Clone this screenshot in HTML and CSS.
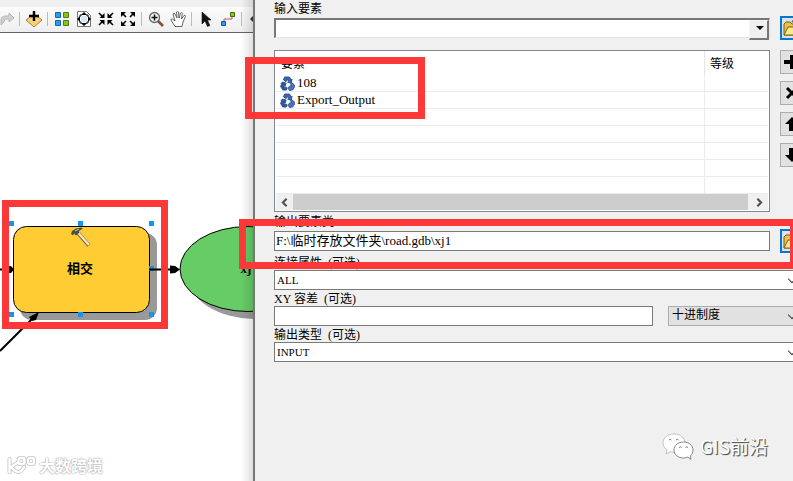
FILE: index.html
```html
<!DOCTYPE html>
<html lang="zh">
    <head>
        <meta charset="utf-8">
        <title>相交</title>
        <link rel="stylesheet" href="styles.css">
    </head>
    <body>
        <div class="desktop">
            <div class="model">
                <div class="toolbar">
                    <button class="tool" aria-label="redo">
                        <svg viewBox="0 0 16 16"><path d="M3 14V9q0-4 5-4h3V2l5 5-5 4V8H8q-2 0-2 3z" fill="#d2d2d2" stroke="#b4b4b4"/></svg>
                    </button>
                    <span class="sep"></span>
                    <button class="tool" aria-label="add data">
                        <svg viewBox="0 0 16 16"><path d="M0 9l8-6 8 6-8 7z" fill="#f5d277" stroke="#a87e34"/><path d="M8 0v10M3 5h10" stroke="#000" stroke-width="2.4"/></svg>
                    </button>
                    <span class="sep"></span>
                    <button class="tool" aria-label="auto layout">
                        <svg viewBox="0 0 16 16"><path d="M1.500 1.500h5v5h-5zM1.500 9.500h5v5h-5z" fill="#2b9cf2" stroke="#1766b0"/><path d="M9.500 1.500h5v5h-5zM9.500 9.500h5v5h-5z" fill="#8cc220" stroke="#547c0c"/></svg>
                    </button>
                    <button class="tool" aria-label="full extent">
                        <svg viewBox="0 0 16 16"><path d="M1.500.5h9l4 4v11h-13z" fill="#fff" stroke="#777"/><path d="M5 5h6v6H5z" fill="#dbe6f2"/><path d="M8 1l3 3H5zM8 15l3-3H5zM1 8l3-3v6zM15 8l-3-3v6z"/><path d="M4 6V4h2M10 4h2v2M12 10v2h-2M6 12H4v-2" fill="none" stroke="#000"/></svg>
                    </button>
                    <button class="tool" aria-label="fixed zoom in">
                        <svg viewBox="0 0 16 16"><path d="M1 2l4 4M15 2l-4 4M1 14l4-4M15 14l-4-4" stroke="#000" stroke-width="1.600"/><path d="M6.500 2v5h-5zM9.500 2v5h5zM6.500 14V9h-5zM9.500 14V9h5z"/></svg>
                    </button>
                    <button class="tool" aria-label="fixed zoom out">
                        <svg viewBox="0 0 16 16"><path d="M2 2l4 4M14 2l-4 4M2 14l4-4M14 14l-4-4" stroke="#000" stroke-width="1.600"/><path d="M1 1h5L1 6zM15 1v5l-5-5zM1 15v-5l5 5zM15 15h-5l5-5z"/></svg>
                    </button>
                    <span class="sep"></span>
                    <button class="tool" aria-label="zoom in">
                        <svg viewBox="0 0 16 16"><path d="M10 10l5 5" stroke="#8f4a3c" stroke-width="2.600"/><circle cx="6.500" cy="6.500" r="5" fill="#eef5fb" stroke="#666" stroke-width="1.300"/><path d="M6.500 3.500v6M3.500 6.500h6" stroke="#111" stroke-width="1.600"/></svg>
                    </button>
                    <button class="tool" aria-label="pan">
                        <svg viewBox="0 0 16 16"><path d="M5 15.500L1 9q0-1.500 1.500-1L5 10 3 3q1-1.500 2 0l2 4-.5-6q1-1 2 0L9 7l1.500-5q1.200-1 1.800.3L11.500 8 14 4.500q1.500-.6 1.500.8L13 11l-1 4.500z" fill="#fff" stroke="#555" stroke-width=".9"/></svg>
                    </button>
                    <span class="sep"></span>
                    <button class="tool" aria-label="select">
                        <svg viewBox="0 0 16 16"><path d="M4 1v12l3-3 2.500 5.500 2.300-1L9.500 9H13z" fill="#111" stroke="#111" stroke-width=".6"/></svg>
                    </button>
                    <button class="tool" aria-label="connect">
                        <svg viewBox="0 0 16 16"><path d="M4 11V8h8V4" fill="none" stroke="#b05a5a"/><path d="M1.500 10.500h4v4h-4z" fill="#2b9cf2" stroke="#1257b5"/><path d="M10.500 1.500h4v4h-4z" fill="#8cc220" stroke="#3f7308"/></svg>
                    </button>
                    <span class="sep"></span>
                    <button class="tool" aria-label="run">
                        <svg viewBox="0 0 16 16"><path d="M2 8l3-3h2v7H6z" fill="#333"/></svg>
                    </button>
                </div>
                <svg class="diagram" viewBox="0 33 253 448" width="253" height="448">
                    <!-- shadows -->
                    <rect x="20" y="233" width="137" height="87" rx="12" fill="#999"/>
                    <ellipse cx="256" cy="276" rx="68" ry="43" fill="#999"/>
                    <!-- tool -->
                    <rect x="13.500" y="226.500" width="136" height="86" rx="13" fill="#fc3" stroke="#000"/>
                    <g fill="#1394f0">
                        <rect x="9" y="221" width="5" height="5"/>
                        <rect x="78" y="221" width="5" height="5"/>
                        <rect x="149" y="221" width="5" height="5"/>
                        <rect x="149" y="266" width="5" height="5"/>
                        <rect x="9" y="312" width="5" height="5"/>
                        <rect x="78" y="312" width="5" height="5"/>
                        <rect x="149" y="312" width="5" height="5"/>
                    </g>
                    <path d="M78 233l11 12.500" stroke="#806a38" stroke-width="4"/>
                    <path d="M78 232.500l11 12.500" stroke="#f1e7c9" stroke-width="2.400"/>
                    <path d="M71 234l1-3 4-2.500 5-1 2 1-4 2.500v2l-3 2.500-2-2-1 2z" fill="#4e4e42"/>
                    <path d="M75 231l4-2" stroke="#c5c5bb"/>
                    <text class="node-name" x="80" y="273">相交</text>
                    <!-- output -->
                    <ellipse cx="248" cy="269" rx="68" ry="42.500" fill="#6c6" stroke="#000"/>
                    <text class="node-out" x="246" y="273">xj</text>
                    <!-- connectors -->
                    <path d="M0 269.500h10M149 269.500h22M0 351l32-32" stroke="#000" stroke-width="2"/>
                    <path d="M8 266h3l3 3.500-3 3.500H8zM170 265.500l5 .5 5 3.500-5 3.500-5 .5zM39 312l-3 8-4 1-3-4z"/>
                </svg>
            </div>

            <div class="dialog">
                <form class="params">
                    <label class="caption" for="in-features">输入要素</label>
                    <div class="row">
                        <div class="combo">
                            <select id="in-features"><option></option></select>
                        </div>
                        <button type="button" class="side browse" aria-label="browse input">
                            <svg viewBox="0 0 20 20"><path d="M2 17V6l2-2h4l2 2h6v11z" fill="#e9c146" stroke="#77601a"/><path d="M2 17l4-8h13l-3 8z" fill="#fce98e" stroke="#77601a"/><path d="M10 4q4-4 7 1" fill="none" stroke="#2a78bd" stroke-width="2"/></svg>
                        </button>
                    </div>
                    <div class="row">
                        <div class="list">
                            <table>
                                <thead>
                                    <tr><th>要素</th><th class="rank">等级</th></tr>
                                </thead>
                                <tbody>
                                    <tr>
                                        <td><span class="item"><svg class="recycle" viewBox="0 0 16 16"><use href="#recycle"/></svg>108</span></td>
                                        <td></td>
                                    </tr>
                                    <tr>
                                        <td><span class="item"><svg class="recycle" viewBox="0 0 16 16"><use href="#recycle"/></svg>Export_Output</span></td>
                                        <td></td>
                                    </tr>
                                    <tr><td></td><td></td></tr>
                                    <tr><td></td><td></td></tr>
                                    <tr><td></td><td></td></tr>
                                    <tr><td></td><td></td></tr>
                                    <tr><td></td><td></td></tr>
                                </tbody>
                            </table>
                            <div class="scroll">
                                <button type="button" aria-label="scroll left"><svg viewBox="0 0 16 16"><path d="M10 4.500L6.500 8l3.500 3.500" fill="none" stroke="#505050" stroke-width="2"/></svg></button>
                                <span class="thumb"></span>
                                <button type="button" aria-label="scroll right"><svg viewBox="0 0 16 16"><path d="M6 4.500L9.500 8 6 11.500" fill="none" stroke="#505050" stroke-width="2"/></svg></button>
                            </div>
                        </div>
                        <div class="actions">
                            <button type="button" class="side" aria-label="add"><svg viewBox="0 0 20 20"><path d="M8 3h5v5h5v4h-5v5H8v-5H2V8h6z"/></svg></button>
                            <button type="button" class="side" aria-label="remove"><svg viewBox="0 0 20 20"><path d="M5 5l10 10M15 5L5 15" stroke="#000" stroke-width="3"/></svg></button>
                            <button type="button" class="side" aria-label="move up"><svg viewBox="0 0 20 20"><path d="M10 3l7 7h-4v7H7v-7H3z"/></svg></button>
                            <button type="button" class="side" aria-label="move down"><svg viewBox="0 0 20 20"><path d="M10 17l7-7h-4V3H7v7H3z"/></svg></button>
                        </div>
                    </div>
                    <label class="caption" for="out-features">输出要素类</label>
                    <div class="row">
                        <input class="box path" id="out-features" type="text" value="F:\临时存放文件夹\road.gdb\xj1">
                        <button type="button" class="side browse" aria-label="browse output">
                            <svg viewBox="0 0 20 20"><path d="M2 17V6l2-2h4l2 2h6v11z" fill="#e9c146" stroke="#77601a"/><path d="M2 17l4-8h13l-3 8z" fill="#fce98e" stroke="#77601a"/><path d="M10 4q4-4 7 1" fill="none" stroke="#2a78bd" stroke-width="2"/></svg>
                        </button>
                    </div>
                    <label class="caption" for="join">连接属性 <span>(可选)</span></label>
                    <div class="drop">
                        <select class="box" id="join"><option>ALL</option></select>
                    </div>
                    <label class="caption" for="tolerance">XY 容差 <span>(可选)</span></label>
                    <div class="pair">
                        <input class="box" id="tolerance" type="text">
                        <div class="drop unit">
                            <select class="box" aria-label="unit"><option>十进制度</option></select>
                        </div>
                    </div>
                    <label class="caption" for="out-type">输出类型 <span>(可选)</span></label>
                    <div class="drop">
                        <select class="box" id="out-type"><option>INPUT</option></select>
                    </div>
                </form>
                <div class="brand">
                    <svg viewBox="0 0 32 28" width="32" height="28">
                        <path d="M12 2C5.500 2 1 6 1 11c0 3 1.500 5.300 4 7l-1 4 4-2.200c8 2 15-2 15-8.800C23 6 18.500 2 12 2z" fill="#fff" stroke="#b5b5b5" stroke-width=".8"/>
                        <path d="M21.500 10C16 10 12 13.500 12 18s4 8 9.500 8c1.500 0 3-.3 4.200-.8l3.300 2-.8-3.400C30 22.500 31 20.500 31 18c0-4.500-4-8-9.500-8z" fill="#fff" stroke="#777" stroke-width=".9"/>
                        <path d="M7 8q1.500-1.500 2.500 0M14 8q1.500-1.500 2.500 0M17 15.500q1.500-1.500 2.500 0M23.500 15.500q1.500-1.500 2.500 0" fill="none" stroke="#777"/>
                    </svg>
                    <span>GIS前沿</span>
                </div>
            </div>

            <!-- highlights -->
            <div class="mark mark-inputs"></div>
            <div class="mark mark-tool"></div>
            <div class="mark mark-output"></div>

            <div class="stamp">
                <svg viewBox="0 0 30 20" width="30" height="20">
                    <g fill="none" stroke-linecap="round" stroke="#c4c4c4" stroke-width="4">
                        <path d="M2.500 4v13M10 8l-6 4 4 4q6 3 9-4"/><rect x="11.500" y="3" width="6" height="6" rx="2"/><rect x="21" y="3" width="6" height="6" rx="2"/>
                    </g>
                    <g fill="none" stroke-linecap="round" stroke="#fff" stroke-width="2.400">
                        <path d="M2.500 4v13M10 8l-6 4 4 4q6 3 9-4"/><rect x="11.500" y="3" width="6" height="6" rx="2"/><rect x="21" y="3" width="6" height="6" rx="2"/>
                    </g>
                </svg>
                <span>大数跨境</span>
            </div>
        </div>

        <svg class="defs" width="0" height="0">
            <symbol id="recycle" viewBox="0 0 16 16">
                <path d="M5 1h5l2 3 1-.5-1 4-4-1 1.200-.8L8 3.500 6.500 6 3.500 4z" fill="#3767b3" stroke="#1d3f80" stroke-width=".8"/>
                <path d="M2.500 6.500l4 1-1 3.500-1-.6L4 12h3v3H3L.5 11 2 8.500 1 8z" fill="#2b59a5" stroke="#1d3f80" stroke-width=".8"/>
                <path d="M12 7l2.500 1.500L16 11l-2.500 4H11v1L8 13l3-3v1.500h2L11 8z" fill="#4779c4" stroke="#1d3f80" stroke-width=".8"/>
            </symbol>
        </svg>
    </body>
</html>
```
FILE: styles.css
```css
* {
    box-sizing: border-box;
}

body {
    margin: 0;
    overflow: hidden;
    font-family: "Liberation Serif", "Noto Sans CJK SC", serif;
    font-size: 12px;
    color: #000;
}

button, input, select {
    margin: 0;
    padding: 0;
    font: inherit;
    color: inherit;
    border-radius: 0;
}

.desktop {
    position: relative;
    display: grid;
    grid-template-columns: 253px 1fr;
    height: 100vh;
    overflow: hidden;
}

.defs {
    position: absolute;
}

/* model window */
.model {
    display: flex;
    flex-direction: column;
    overflow: hidden;
    background: #fff;
}

.toolbar {
    display: flex;
    flex: none;
    align-items: center;
    gap: 6px;
    height: 33px;
    padding-top: 6px;
    border-bottom: 1px solid #646464;
    background: linear-gradient(#f0f0f0 7px, #fcfcfc 7px, #eee);
}

.tool {
    flex: none;
    width: 16px;
    height: 16px;
    border: 0;
    background: none;
}

.tool:first-child {
    margin-left: -2px;
}

.tool svg, .side svg, .scroll svg {
    display: block;
}

.sep {
    flex: none;
    width: 1px;
    height: 14px;
    margin-left: -1px;
    background: #bbb;
}

.diagram {
    display: block;
    flex: none;
}

.node-name {
    font-family: "Noto Sans CJK SC", sans-serif;
    font-size: 13px;
    font-weight: bold;
    text-anchor: middle;
}

.node-out {
    font-size: 13px;
    font-weight: bold;
    text-anchor: middle;
}

/* tool dialog */
.dialog {
    display: flex;
    flex-direction: column;
    min-width: 0;
    overflow: hidden;
    padding-left: 19px;
    border-left: 2px solid #777;
    background: #f0f0f0;
}

.model::after {
    content: "";
    position: absolute;
    top: 0;
    left: 241px;
    width: 12px;
    height: 100%;
    background: linear-gradient(to right, transparent, rgba(0, 0, 0, 0.12));
}

.params {
    display: flex;
    flex-direction: column;
    margin-right: -11px;
}

.caption {
    height: 16px;
    line-height: 18px;
    white-space: nowrap;
}

.caption span {
    margin-left: 3px;
}

.row {
    display: grid;
    grid-template-columns: 1fr 24px;
    gap: 10px;
    align-items: center;
    margin-bottom: 1px;
}

.row + .row {
    margin-top: 9px;
}

.box {
    width: 100%;
    height: 20px;
    padding: 0 2px;
    border: 1px solid #7a7a7a;
    background: #fff;
    appearance: none;
    outline: none;
}

.path {
    padding: 0 1px 3px;
    font-size: 13px;
}

.combo, .drop {
    position: relative;
}

.combo select {
    display: block;
    width: 100%;
    height: 20px;
    border: 1px solid #e3e3e3;
    border-top: 2px solid #777;
    border-left: 2px solid #777;
    background: #fff;
    appearance: none;
}

.combo::before {
    content: "";
    position: absolute;
    top: 2px;
    right: 1px;
    width: 17px;
    height: 17px;
    border: 1px solid #f5f5f5;
    border-right: 2px solid #777;
    border-bottom: 2px solid #777;
    background: #f0f0f0;
    pointer-events: none;
}

.combo::after {
    content: "";
    position: absolute;
    top: 8px;
    right: 6px;
    border: 4px solid transparent;
    border-top-color: #000;
    border-bottom: 0;
    pointer-events: none;
}

.drop select {
    display: block;
    padding-bottom: 1px;
    font-size: 11px;
}

.drop::after {
    content: "";
    position: absolute;
    top: 6px;
    right: 9px;
    width: 5px;
    height: 5px;
    border: 1px solid #444;
    border-top: 0;
    border-left: 0;
    transform: rotate(45deg);
    pointer-events: none;
}

.pair {
    display: grid;
    grid-template-columns: 1fr 136px;
    gap: 15px;
}

.unit select {
    padding: 0 3px 2px;
    font-size: 12px;
    border-color: #adadad;
    background: #e1e1e1;
}

.side {
    display: flex;
    align-items: center;
    justify-content: center;
    width: 24px;
    height: 24px;
    border: 1px solid #adadad;
    background: #e1e1e1;
}

.side svg {
    flex: none;
    width: 20px;
    height: 20px;
}

.browse {
    border: 2px solid #0078d7;
}

.actions {
    display: flex;
    flex-direction: column;
    align-self: start;
    gap: 7px;
}

.list {
    display: flex;
    flex-direction: column;
    height: 162px;
    overflow: hidden;
    padding: 0 1px 1px;
    border: 1px solid #828790;
    background: #fff;
}

.list table {
    width: 100%;
    table-layout: fixed;
    border-collapse: separate;
    border-spacing: 0;
}

.list th {
    height: 24px;
    padding: 0 5px;
    border-right: 1px solid #e5e5e5;
    font-weight: normal;
    text-align: left;
}

.list td {
    height: 17px;
    padding: 0 4px;
    border-right: 1px solid #ececec;
    border-bottom: 1px solid #ececec;
    font-size: 13px;
    line-height: 16px;
}

.list th:last-child, .list td:last-child {
    border-right: 0;
}

.list .rank {
    width: 63px;
}

.item {
    display: flex;
    align-items: center;
    gap: 2px;
    height: 16px;
}

.recycle {
    width: 15px;
    height: 15px;
}

.scroll {
    display: flex;
    flex: none;
    height: 16px;
    margin-top: auto;
    background: #f0f0f0;
}

.scroll button {
    width: 17px;
    height: 16px;
    border: 0;
    background: none;
}

.scroll .thumb {
    flex: 1;
    margin-right: 3px;
    background: #cdcdcd;
}

/* highlights */
.mark {
    position: absolute;
    border: 7px solid #fd3838;
    pointer-events: none;
}

.mark-inputs {
    top: 57px;
    left: 245px;
    width: 180px;
    height: 62px;
}

.mark-tool {
    top: 200px;
    left: 2px;
    width: 166px;
    height: 129px;
}

.mark-output {
    top: 219px;
    left: 239px;
    right: -4px;
    height: 50px;
}

.brand {
    display: flex;
    align-items: center;
    align-self: flex-end;
    gap: 6px;
    margin: auto 25px 20px 0;
    font-family: "Noto Sans CJK SC", sans-serif;
    font-size: 19px;
    line-height: 30px;
    color: #fff;
    text-shadow: 1px 1px 1px #555, 1px 1px 0 #888;
}

.stamp {
    position: absolute;
    left: 7px;
    bottom: 6px;
    display: flex;
    align-items: center;
    gap: 2px;
    font-family: "Noto Sans CJK SC", sans-serif;
    font-size: 16px;
    font-weight: bold;
    line-height: 20px;
    color: #fff;
    text-shadow: 0 0 2px #999, 0 0 1px #aaa;
}
```
